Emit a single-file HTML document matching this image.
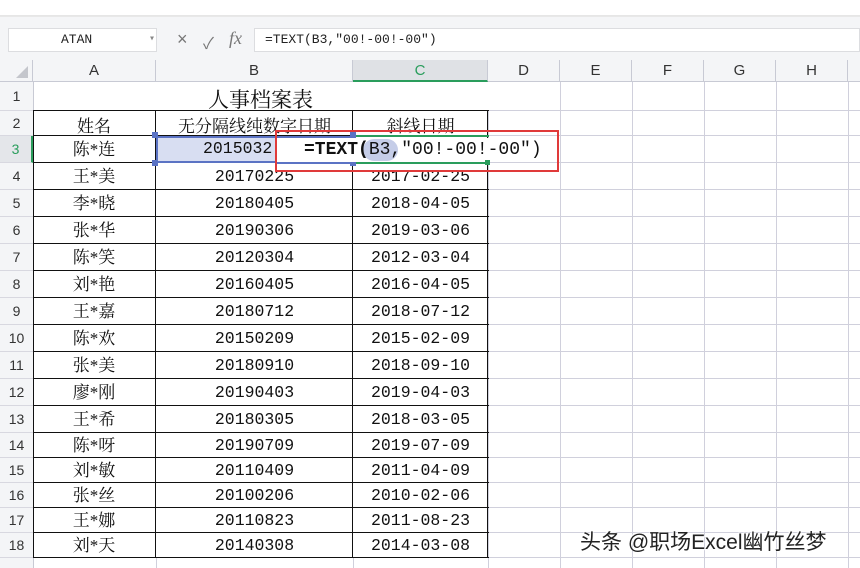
<!DOCTYPE html>
<html style="width:860px;height:568px;overflow:hidden"><head><meta charset="utf-8"><style>
body{margin:0;width:860px;height:568px;overflow:hidden;background:#fff;position:relative;font-family:"Liberation Sans","Noto Sans CJK SC",sans-serif}
div{position:absolute;box-sizing:border-box}
.ch{top:60px;height:22px;font-size:15px;color:#333;text-align:center;line-height:22px;border-right:1px solid #c8cad4}
.rh{left:0;width:33px;font-size:14px;color:#333;text-align:center;background:#f4f5f7;border-bottom:1px solid #d8d8e0}
.vl{top:82px;height:486px;width:1px;background:#d0d0dc}
.hl{left:33px;width:827px;height:1px;background:#d0d0dc}
.c{font-family:"Liberation Serif","Noto Serif CJK SC",serif;font-size:17px;color:#111;text-align:center}
.n{font-family:"Liberation Mono",monospace;font-size:16.5px;color:#111;text-align:center}
</style></head><body>
<div style="left:0;top:0;width:860px;height:16px;background:#fff;border-bottom:1px solid #e6e6e6"></div>
<div style="left:0;top:16px;width:860px;height:44px;background:#f4f5f7;border-top:1px solid #e8e8e8"></div>
<div style="left:8px;top:28px;width:149px;height:24px;background:#fff;border:1px solid #dcdde0;font-family:'Liberation Mono',monospace;font-size:13px;line-height:22px;padding-left:52px;color:#222">ATAN<span style="position:absolute;left:140px;color:#888;font-size:10px">▾</span></div>
<div style="left:177px;top:29px;font-size:18px;color:#777">×</div>
<div style="left:203px;top:30px;font-size:16px;color:#777">✓</div>
<div style="left:229px;top:28px;font-size:18px;color:#777;font-style:italic;font-family:'Liberation Serif',serif">fx</div>
<div style="left:254px;top:28px;width:606px;height:24px;background:#fff;border:1px solid #dcdde0;font-family:'Liberation Mono',monospace;font-size:13px;line-height:22px;padding-left:10px;color:#222">=TEXT(B3,″00!-00!-00″)</div>
<div style="left:0;top:60px;width:860px;height:22px;background:#f4f5f7;border-bottom:1px solid #c8cad4"></div>
<div style="left:0;top:60px;width:33px;height:22px;border-right:1px solid #c8cad4"><div style="left:16px;top:6px;width:0;height:0;border-left:12px solid transparent;border-bottom:12px solid #c4c6cc"></div></div>
<div class="ch" style="left:33px;width:123px">A</div>
<div class="ch" style="left:156px;width:197px">B</div>
<div class="ch" style="left:353px;width:135px;background:#dfe1e5;color:#2a9d5c;border-bottom:2px solid #2a9d5c;height:22px">C</div>
<div class="ch" style="left:488px;width:72px">D</div>
<div class="ch" style="left:560px;width:72px">E</div>
<div class="ch" style="left:632px;width:72px">F</div>
<div class="ch" style="left:704px;width:72px">G</div>
<div class="ch" style="left:776px;width:72px">H</div>
<div class="vl" style="left:33px;background:#c8cad4"></div>
<div class="vl" style="left:560px"></div><div class="vl" style="left:632px"></div><div class="vl" style="left:704px"></div><div class="vl" style="left:776px"></div><div class="vl" style="left:848px"></div>
<div class="vl" style="left:488px;top:111px;height:457px"></div>
<div class="vl" style="left:156px;top:558px;height:10px"></div><div class="vl" style="left:353px;top:558px;height:10px"></div>
<div id="rows" style="left:0;top:0;width:860px;height:568px;overflow:hidden"></div>
<script>
var tops=[82,111,136,163,190,217,244,271,298,325,352,379,406,433,458,483,508,533,558,590];
var d=[["陈*连","20150325","2015-03-25"],["王*美","20170225","2017-02-25"],["李*晓","20180405","2018-04-05"],["张*华","20190306","2019-03-06"],["陈*笑","20120304","2012-03-04"],["刘*艳","20160405","2016-04-05"],["王*嘉","20180712","2018-07-12"],["陈*欢","20150209","2015-02-09"],["张*美","20180910","2018-09-10"],["廖*刚","20190403","2019-04-03"],["王*希","20180305","2018-03-05"],["陈*呀","20190709","2019-07-09"],["刘*敏","20110409","2011-04-09"],["张*丝","20100206","2010-02-06"],["王*娜","20110823","2011-08-23"],["刘*天","20140308","2014-03-08"]];
var h="";
for(var i=0;i<19;i++){var t=tops[i],hh=tops[i+1]-t;
h+='<div class="rh" style="top:'+t+'px;height:'+hh+'px;line-height:'+hh+'px;'+(i==2?'background:#e4e6ea;color:#2a9d5c;border-right:2px solid #2a9d5c':'')+'">'+(i+1)+'</div>';
if(i<18)h+='<div class="hl" style="top:'+(t+hh-1)+'px;left:488px;width:372px"></div>';}
for(var i=1;i<=18;i++){h+='<div style="left:33px;top:'+(tops[i]-1)+'px;width:456px;height:1px;background:#111"></div>';}
for(var x of [33,155,352,487]){h+='<div style="left:'+x+'px;top:110px;width:1px;height:448px;background:#111"></div>';}
h+='<div class="c" style="left:33px;top:84px;width:455px;font-size:21px">人事档案表</div>';
h+='<div class="c" style="left:33px;top:112px;width:122px">姓名</div><div class="c" style="left:156px;top:112px;width:197px">无分隔线纯数字日期</div><div class="c" style="left:353px;top:112px;width:135px">斜线日期</div>';
for(var i=0;i<16;i++){var t=tops[i+2],hh=tops[i+3]-t;
h+='<div class="c" style="left:33px;top:'+(t+(hh-24)/2)+'px;width:122px;line-height:24px">'+d[i][0]+'</div>';
if(i>0){h+='<div class="n" style="left:156px;top:'+(t+(hh-22)/2)+'px;width:197px;line-height:22px">'+d[i][1]+'</div><div class="n" style="left:353px;top:'+(t+(hh-22)/2)+'px;width:135px;line-height:22px">'+d[i][2]+'</div>';}}
document.getElementById('rows').innerHTML=h;
</script>
<div style="left:156px;top:136px;width:198px;height:27px;background:#d8def2;border:2px solid #5b73c4"></div>
<div class="n" style="left:203px;top:138px;width:80px;line-height:22px;text-align:left">2015032</div>
<div style="left:152px;top:132px;width:6px;height:6px;background:#5b73c4"></div>
<div style="left:152px;top:160px;width:6px;height:6px;background:#5b73c4"></div>
<div style="left:350px;top:132px;width:6px;height:6px;background:#5b73c4"></div>
<div style="left:350px;top:160px;width:6px;height:6px;background:#5b73c4"></div>
<div style="left:277px;top:138px;width:280px;height:24px;background:#fff"></div>
<div style="left:356px;top:135px;width:133px;height:2px;background:#2a9d5c"></div>
<div style="left:356px;top:162px;width:133px;height:2px;background:#2a9d5c"></div>
<div style="left:277px;top:162px;width:77px;height:2px;background:#5b73c4"></div>
<div style="left:485px;top:160px;width:5px;height:5px;background:#2a9d5c"></div>
<div style="left:363px;top:139px;width:35px;height:22px;background:#c5cde8;border-radius:11px"></div>
<div style="left:304px;top:138px;font-family:'Liberation Mono',monospace;font-size:18px;line-height:24px;color:#111;white-space:pre"><b>=TEXT(</b>B3,″00!-00!-00″)</div>
<div style="left:275px;top:130px;width:284px;height:42px;border:2px solid #e03a3a"></div>
<div style="left:580px;top:526px;font-size:21px;color:#222;white-space:nowrap;text-shadow:1px 1px 1px #fff,-1px -1px 1px #fff">头条 @职场Excel幽竹丝梦</div>
</body></html>
